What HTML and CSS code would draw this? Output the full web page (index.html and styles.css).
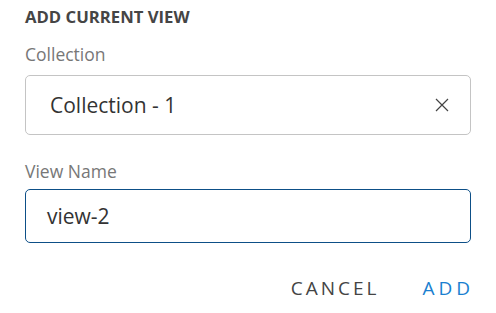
FILE: index.html
```html
<!DOCTYPE html>
<html lang="en">
<head>
  <meta charset="UTF-8">
  <title>Add current view</title>
  <link rel="stylesheet" href="styles.css">
</head>
<body>
  <div class="dialog">
    <h2 class="title">ADD CURRENT VIEW</h2>
    <div class="field">
      <label class="label">Collection</label>
      <div class="box select">
        <span class="value">Collection - 1</span>
        <svg class="clear" width="14" height="14" viewBox="0 0 14 14">
          <path d="M1 1L13 13M13 1L1 13" stroke="#444" stroke-width="1.2" fill="none"/>
        </svg>
      </div>
    </div>
    <div class="field second">
      <label class="label">View Name</label>
      <div class="box input focused">
        <span class="value">view-2</span>
      </div>
    </div>
    <div class="actions">
      <button class="btn cancel">CANCEL</button>
      <button class="btn add">ADD</button>
    </div>
  </div>
</body>
</html>
```

FILE: styles.css
```css
body { margin: 0; font-family: "Open Sans", sans-serif; background: #fff; }
.dialog { width: 446px; padding: 6px 25px 0 25px; }
.title { margin: 0; font-size: 16.7px; font-weight: 700; color: #454545; line-height: 22px; }
.field { margin-top: 14px; }
.field.second { margin-top: 24px; }
.label { display: block; font-size: 17.5px; color: #777; line-height: 24px; }
.box { box-sizing: border-box; display: flex; align-items: center; justify-content: space-between; border: 1px solid #c4c4c4; border-radius: 5px; margin-top: 9px; }
.second .box { margin-top: 6px; }
.select { height: 60px; padding: 0 21px 0 24px; }
.input { height: 54px; padding: 0 21px; }
.focused { border-color: #0d4f87; }
.value { font-size: 21px; color: #333; }
.actions { display: flex; justify-content: flex-end; gap: 43px; margin-top: 33px; }
.btn { background: none; border: none; padding: 0; font-family: "Open Sans", sans-serif; font-size: 19px; letter-spacing: 3px; line-height: 24px; }
.cancel { color: #444; }
.add { color: #1a7fd0; letter-spacing: 4px; margin-right: -3px; }
```
